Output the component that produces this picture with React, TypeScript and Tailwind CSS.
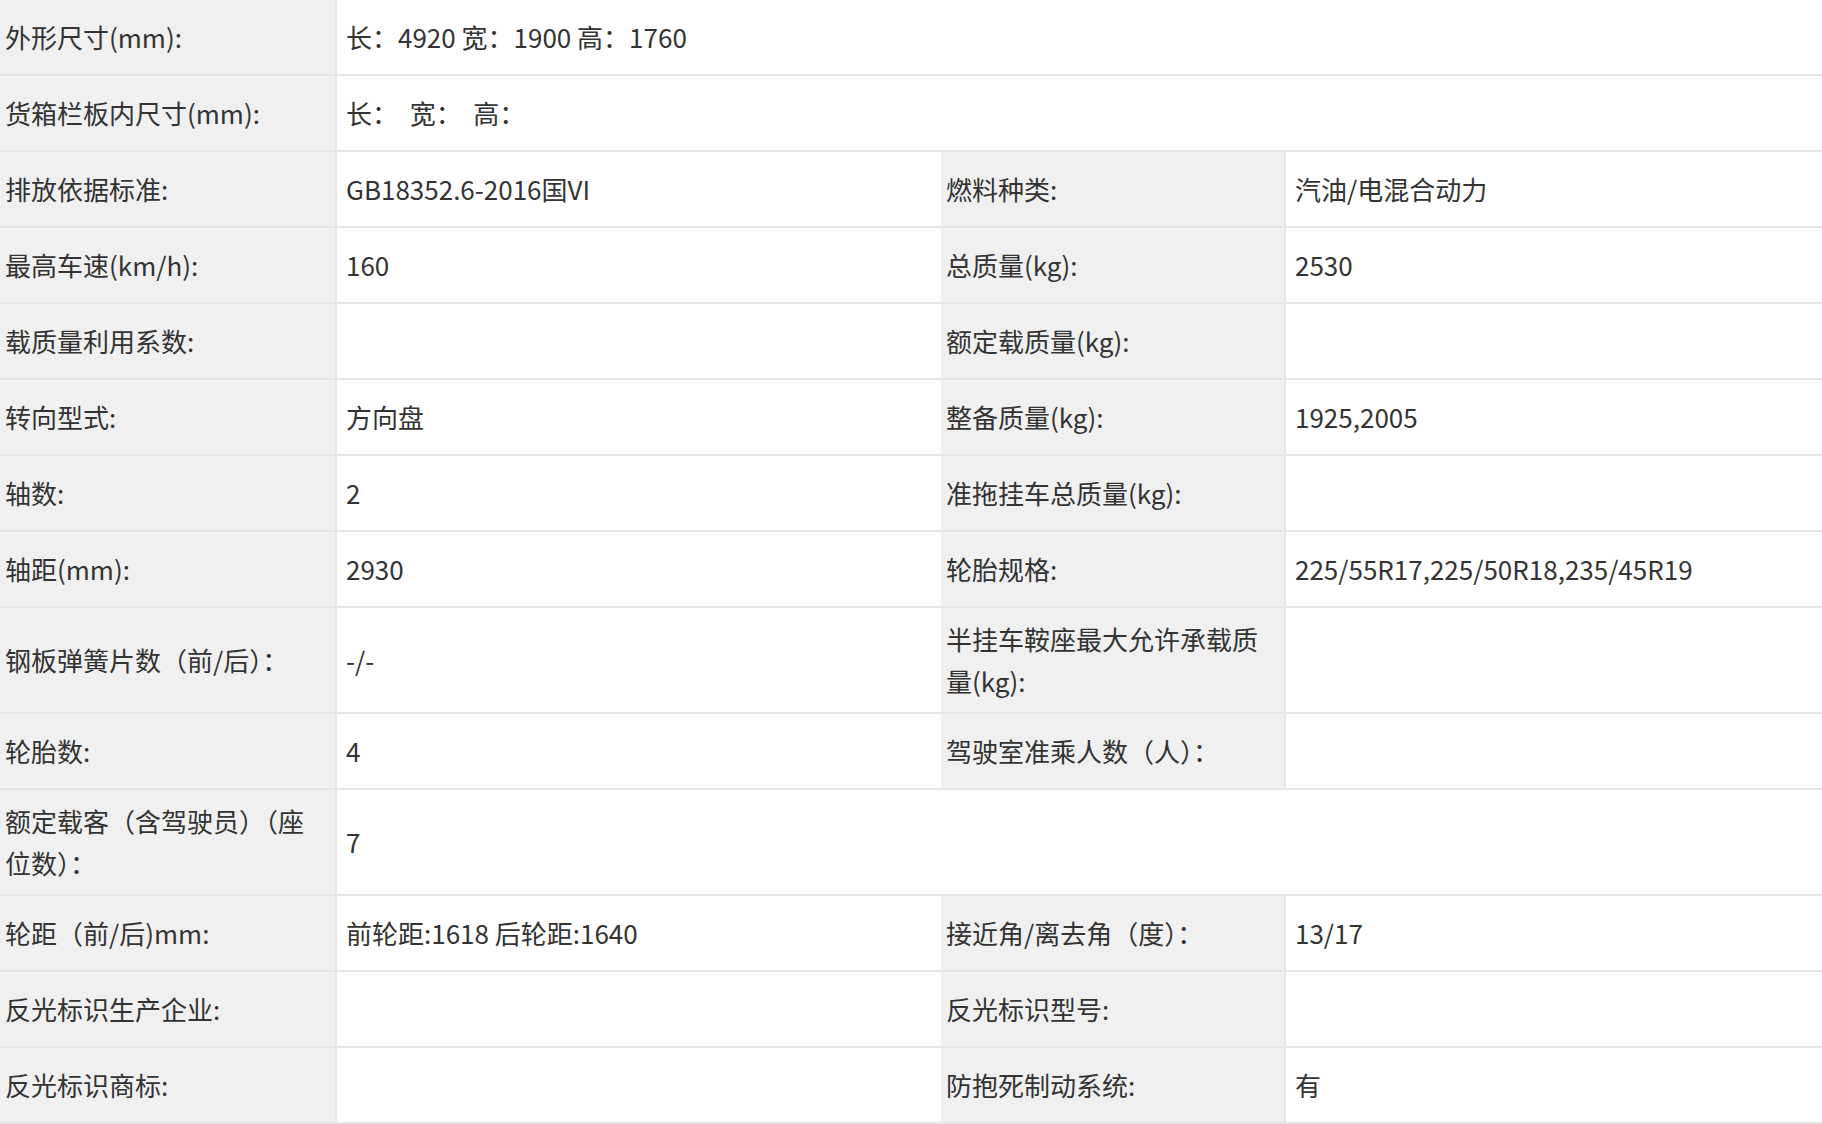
type Cell = { label: string; value?: string };
type Row = { cells: Cell[]; tall?: boolean };

const rows: Row[] = [
  { cells: [{ label: "外形尺寸(mm):", value: "长：4920 宽：1900 高：1760" }] },
  { cells: [{ label: "货箱栏板内尺寸(mm):", value: "长：  宽：  高：" }] },
  { cells: [{ label: "排放依据标准:", value: "GB18352.6-2016国VI" }, { label: "燃料种类:", value: "汽油/电混合动力" }] },
  { cells: [{ label: "最高车速(km/h):", value: "160" }, { label: "总质量(kg):", value: "2530" }] },
  { cells: [{ label: "载质量利用系数:", value: "" }, { label: "额定载质量(kg):", value: "" }] },
  { cells: [{ label: "转向型式:", value: "方向盘" }, { label: "整备质量(kg):", value: "1925,2005" }] },
  { cells: [{ label: "轴数:", value: "2" }, { label: "准拖挂车总质量(kg):", value: "" }] },
  { cells: [{ label: "轴距(mm):", value: "2930" }, { label: "轮胎规格:", value: "225/55R17,225/50R18,235/45R19" }] },
  { tall: true, cells: [{ label: "钢板弹簧片数（前/后）：", value: "-/-" }, { label: "半挂车鞍座最大允许承载质量(kg):", value: "" }] },
  { cells: [{ label: "轮胎数:", value: "4" }, { label: "驾驶室准乘人数（人）：", value: "" }] },
  { tall: true, cells: [{ label: "额定载客（含驾驶员）（座位数）：", value: "7" }] },
  { cells: [{ label: "轮距（前/后)mm:", value: "前轮距:1618 后轮距:1640" }, { label: "接近角/离去角（度）：", value: "13/17" }] },
  { cells: [{ label: "反光标识生产企业:", value: "" }, { label: "反光标识型号:", value: "" }] },
  { cells: [{ label: "反光标识商标:", value: "" }, { label: "防抱死制动系统:", value: "有" }] },
];

export default function App() {
  return (
    <div
      className="w-[1822px] h-[1124px] overflow-hidden bg-white text-[#333] text-[26px] leading-[42px]"
      style={{ fontFamily: '"Noto Sans CJK SC", "Noto Sans", sans-serif' }}
    >
      <div className="grid grid-cols-[335px_606px_343px_1fr]">
        {rows.map((row, i) => {
          const h = row.tall ? "h-[106px]" : "h-[76px]";
          const single = row.cells.length === 1;
          return row.cells.flatMap((c, j) => [
            <div
              key={`${i}-${j}-l`}
              className={`${h} flex items-center bg-[#f0f0f0] border-b-2 border-[#e6e6e6] pl-[5px] pr-3`}
            >
              <span className="block">{c.label}</span>
            </div>,
            <div
              key={`${i}-${j}-v`}
              className={`${h} ${single ? "col-span-3" : ""} flex items-center bg-white border-b-2 border-l-2 border-[#e6e6e6] pl-[9px] whitespace-pre`}
            >
              {c.value}
            </div>,
          ]);
        })}
      </div>
    </div>
  );
}
